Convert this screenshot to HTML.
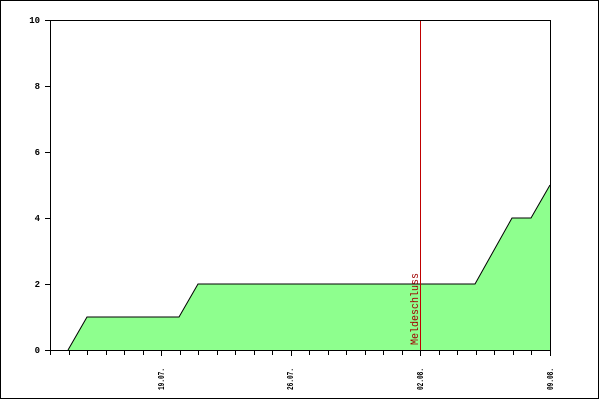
<!DOCTYPE html>
<html><head><style>html,body{margin:0;padding:0;background:#fff}svg{display:block}</style></head>
<body>
<svg width="600" height="400" xmlns="http://www.w3.org/2000/svg" shape-rendering="crispEdges">
<rect x="0.5" y="0.5" width="598" height="398" fill="#fff" stroke="#000"/>
<polygon points="68,350 87,317 179,317 198,284 475,284 512,218 531,218 550,185 550,350" fill="#8eff8e" stroke="none"/>
<polyline points="68,350 87,317 179,317 198,284 475,284 512,218 531,218 550,185" fill="none" stroke="#000" stroke-width="1" shape-rendering="auto"/>
<line x1="420.5" y1="20" x2="420.5" y2="350" stroke="#c00000"/>
<g stroke="#000">
<line x1="50.5" y1="20" x2="50.5" y2="351"/>
<line x1="550.5" y1="20" x2="550.5" y2="351"/>
<line x1="45" y1="350.5" x2="551" y2="350.5"/>
<line x1="45" y1="20.5" x2="551" y2="20.5"/>
<line x1="45" y1="284.5" x2="50" y2="284.5"/>
<line x1="45" y1="218.5" x2="50" y2="218.5"/>
<line x1="45" y1="152.5" x2="50" y2="152.5"/>
<line x1="45" y1="86.5" x2="50" y2="86.5"/>
</g>
<g stroke="#000" id="ticks"></g>
<g font-family="Liberation Mono, monospace" font-size="9" font-weight="bold" fill="#000" text-anchor="end">
<text x="40" y="353">0</text>
<text x="40" y="287">2</text>
<text x="40" y="221">4</text>
<text x="40" y="155">6</text>
<text x="40" y="89">8</text>
<text x="40" y="23">10</text>
</g>
<g font-family="Liberation Mono, monospace" font-size="9" font-weight="bold" fill="#000">
<text transform="translate(164,390) rotate(-90)" textLength="22" lengthAdjust="spacingAndGlyphs">19.07.</text>
<text transform="translate(293,390) rotate(-90)" textLength="22" lengthAdjust="spacingAndGlyphs">26.07.</text>
<text transform="translate(423,390) rotate(-90)" textLength="22" lengthAdjust="spacingAndGlyphs">02.08.</text>
<text transform="translate(553,390) rotate(-90)" textLength="22" lengthAdjust="spacingAndGlyphs">09.08.</text>
</g>
<text transform="translate(418,345) rotate(-90)" font-family="Liberation Mono, monospace" font-size="11" fill="#a00000" textLength="72" lengthAdjust="spacingAndGlyphs">Meldeschluss</text>
<script>
var g=document.getElementById('ticks');
for(var k=0;k<=27;k++){var x=Math.round(50+k*500/27)+0.5;var major=(k%7==6);
var l=document.createElementNS('http://www.w3.org/2000/svg','line');
l.setAttribute('x1',x);l.setAttribute('x2',x);l.setAttribute('y1',350);l.setAttribute('y2',major?356:355);g.appendChild(l);}
</script>
</svg>
</body></html>
